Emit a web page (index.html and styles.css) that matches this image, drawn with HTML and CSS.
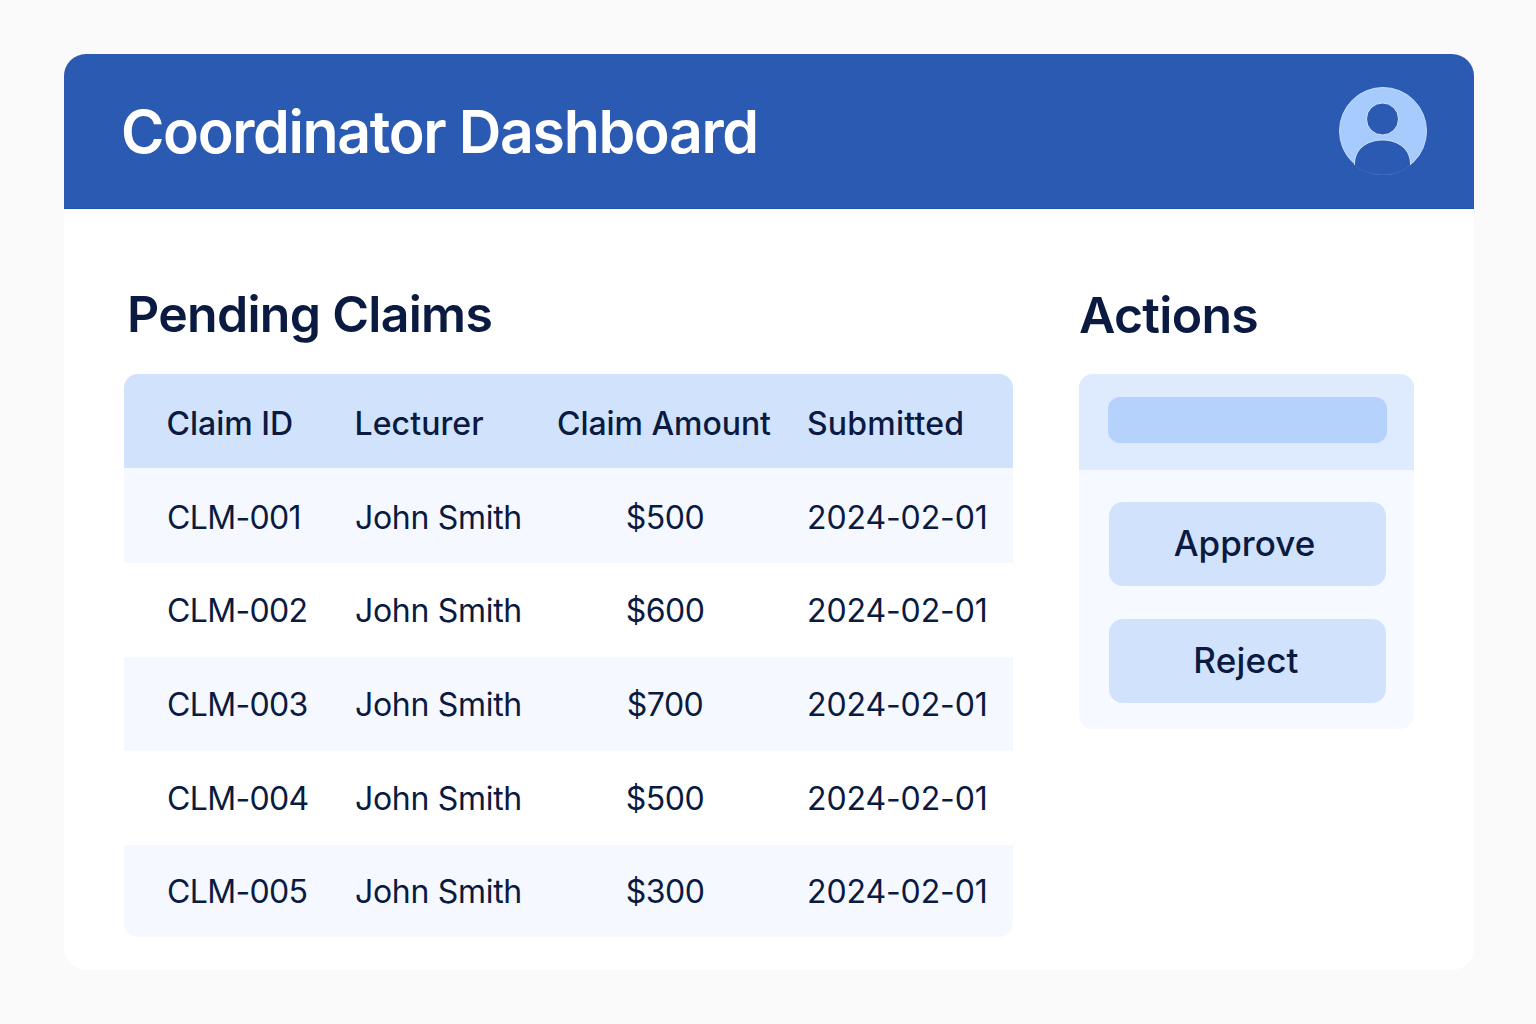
FILE: index.html
```html
<!DOCTYPE html>
<html lang="en">
<head>
    <meta charset="UTF-8">
    <meta name="viewport" content="width=device-width, initial-scale=1.0">
    <title>Coordinator Dashboard</title>
    <link rel="stylesheet" href="styles.css">
</head>
<body>
    <div class="card">
        <header class="top-bar">
            <h1>Coordinator Dashboard</h1>
            <svg class="avatar" viewBox="0 0 88 88" width="88" height="88" aria-hidden="true">
                <circle cx="44" cy="44" r="43.500" fill="#a6cbfc" stroke="#c3dcfd" stroke-width="1"/>
                <circle cx="43.500" cy="32" r="16" fill="#2b5ab3" stroke="#d3e5fe" stroke-width="1"/>
                <path d="M15.500 78 C15 63 27 53 43.500 53 C60 53 72 63 71.500 78 C65 84.500 55 88 44 88 C33 88 22 84.500 15.500 78 Z" fill="#2b5ab3"/>
                <path d="M15.500 78 C15 63 27 53 43.500 53 C60 53 72 63 71.500 78" fill="none" stroke="#d3e5fe" stroke-width="1"/>
                <path d="M15.500 78 C22 84.500 33 87.500 44 87.500 C55 87.500 65 84.500 71.500 78" fill="none" stroke="#3a68bd" stroke-width="1"/>
            </svg>
        </header>
        <main class="content">
            <section class="claims">
                <h2>Pending Claims</h2>
                <div class="table-wrap">
                    <table>
                        <colgroup>
                            <col class="col-id">
                            <col class="col-name">
                            <col class="col-amount">
                            <col class="col-date">
                        </colgroup>
                        <thead>
                            <tr>
                                <th class="id">Claim ID</th>
                                <th class="name">Lecturer</th>
                                <th class="amount">Claim Amount</th>
                                <th class="date">Submitted</th>
                            </tr>
                        </thead>
                        <tbody>
                            <tr>
                                <td class="id">CLM-001</td>
                                <td>John Smith</td>
                                <td class="amount">$500</td>
                                <td class="date">2024-02-01</td>
                            </tr>
                            <tr>
                                <td class="id">CLM-002</td>
                                <td>John Smith</td>
                                <td class="amount">$600</td>
                                <td class="date">2024-02-01</td>
                            </tr>
                            <tr>
                                <td class="id">CLM-003</td>
                                <td>John Smith</td>
                                <td class="amount">$700</td>
                                <td class="date">2024-02-01</td>
                            </tr>
                            <tr>
                                <td class="id">CLM-004</td>
                                <td>John Smith</td>
                                <td class="amount">$500</td>
                                <td class="date">2024-02-01</td>
                            </tr>
                            <tr>
                                <td class="id">CLM-005</td>
                                <td>John Smith</td>
                                <td class="amount">$300</td>
                                <td class="date">2024-02-01</td>
                            </tr>
                        </tbody>
                    </table>
                </div>
            </section>
            <aside class="actions">
                <h2>Actions</h2>
                <div class="panel">
                    <div class="panel-head">
                        <div class="panel-bar"></div>
                    </div>
                    <div class="panel-body">
                        <button>Approve</button>
                        <button class="reject">Reject</button>
                    </div>
                </div>
            </aside>
        </main>
    </div>
</body>
</html>
```

FILE: styles.css
```css
* {
    box-sizing: border-box;
}
body {
    margin: 0;
    height: 1024px;
    padding: 54px 62px 54px 64px;
    background-color: #fafafa;
    font-family: Inter, "Liberation Sans", sans-serif;
    color: #0a1a41;
}
.card {
    height: 916px;
    background-color: white;
    border-radius: 22px;
    overflow: hidden;
}
.top-bar {
    height: 155px;
    padding: 0 47px 0 57px;
    display: flex;
    align-items: center;
    justify-content: space-between;
    background-color: #2b5ab3;
    border-bottom: 1px solid #1f52ae;
}
h1 {
    margin: 0;
    font-size: 59px;
    font-weight: 600;
    letter-spacing: -1.36px;
    color: white;
}
.avatar {
    display: block;
}
.content {
    padding: 0 60px;
    display: flex;
    justify-content: space-between;
}
h2 {
    margin: 0;
    height: 165px;
    padding-top: 75px;
    font-size: 50px;
    line-height: 60px;
    font-weight: 600;
    letter-spacing: -0.7px;
    color: #0a1a41;
}
.claims {
    width: 889px;
}
.claims h2 {
    padding-left: 3px;
}
.table-wrap {
    border-radius: 14px;
    overflow: hidden;
}
table {
    width: 100%;
    table-layout: fixed;
    border-collapse: collapse;
    font-size: 32px;
}
.col-id {
    width: 188px;
}
.col-name {
    width: 232px;
}
.col-amount {
    width: 240px;
}
.col-date {
    width: 229px;
}
th, td {
    height: 94px;
    padding: 0 0 0 43px;
    text-align: left;
    white-space: nowrap;
}
th {
    padding-top: 4px;
    font-weight: 500;
    background-color: #d1e2fd;
}
td {
    font-weight: 400;
    letter-spacing: -0.3px;
}
tbody tr:nth-child(odd) {
    background-color: #f5f8fe;
}
tbody tr:first-child td {
    height: 95px;
    padding-top: 3px;
}
tbody tr:last-child td {
    height: 92px;
}
th.id {
    padding-left: 42.500px;
}
td.id {
    letter-spacing: -0.65px;
}
th.name {
    padding-left: 42.500px;
    letter-spacing: 0.1px;
}
th.amount {
    padding-left: 0;
    text-align: center;
    letter-spacing: -0.05px;
}
td.amount {
    padding-left: 2px;
    text-align: center;
    letter-spacing: -0.5px;
}
th.date {
    padding-left: 23px;
    letter-spacing: 0.2px;
}
td.date {
    padding-left: 23px;
    letter-spacing: -0.1px;
}
.actions {
    width: 335px;
}
.actions h2 {
    padding-top: 76px;
}
.panel {
    height: 355px;
    border-radius: 14px;
    overflow: hidden;
    background-color: #f6f9ff;
}
.panel-head {
    height: 96px;
    padding: 23px 27px 0 29px;
    background-color: #deeafe;
}
.panel-bar {
    height: 46px;
    border-radius: 12px;
    background-color: #b5d2fd;
}
.panel-body {
    padding: 32px 28px 0 30px;
    display: flex;
    flex-direction: column;
    gap: 33px;
}
button {
    height: 84px;
    padding: 0 6px 2px 0;
    border: none;
    border-radius: 14px;
    background-color: #d1e2fd;
    font-family: inherit;
    font-size: 35px;
    font-weight: 500;
    color: #0a1a41;
}
button.reject {
    padding-right: 3px;
    letter-spacing: 0.2px;
}
```
